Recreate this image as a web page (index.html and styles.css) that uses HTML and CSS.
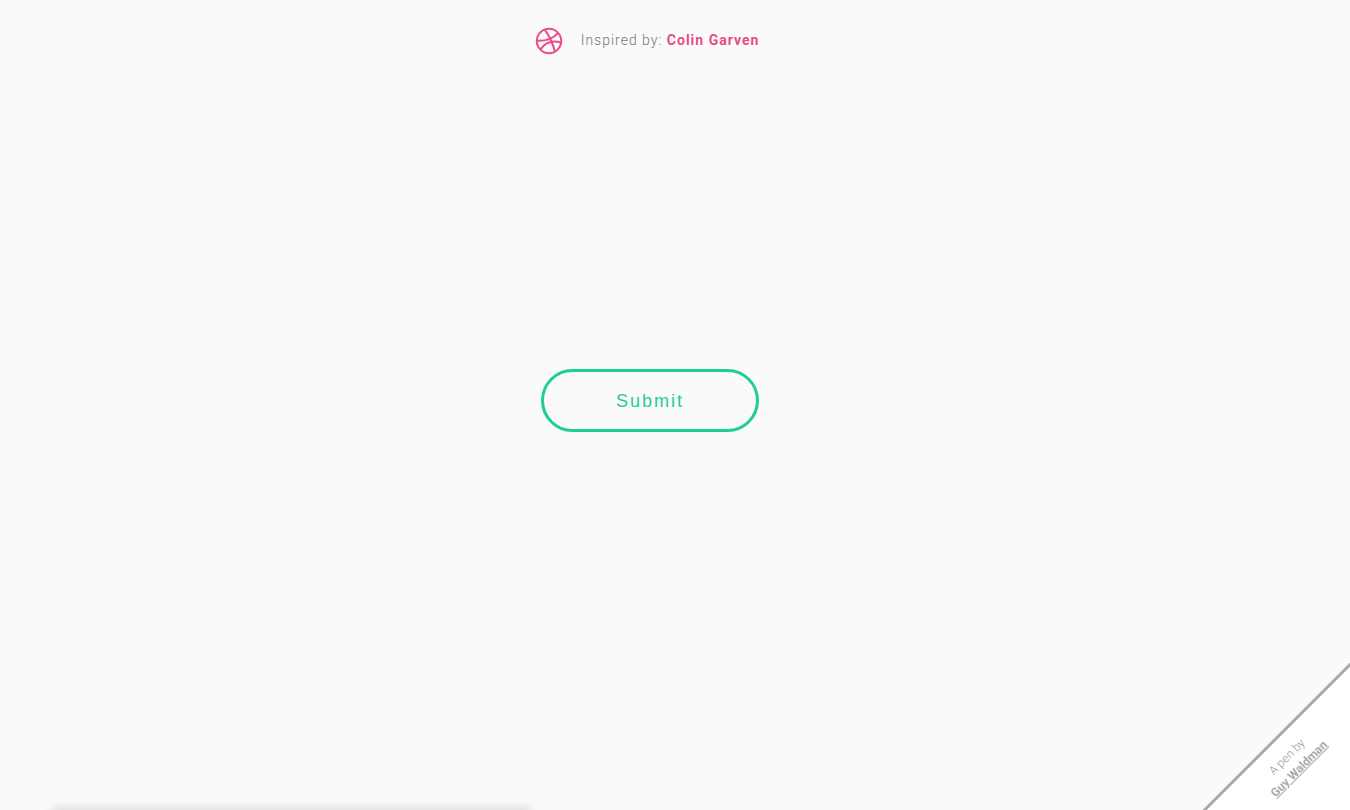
FILE: index.html
```html
<!DOCTYPE html>
<html lang="en">
<head>
<meta charset="utf-8">
<title>Submit Button</title>
<link rel="stylesheet" href="styles.css">
</head>
<body>
<div class="page">
  <header class="credit">
    <svg class="credit-icon" viewBox="0 0 28 28" aria-hidden="true">
      <circle cx="14" cy="14" r="12.2"/>
      <path d="M9.800 2.800C14 8.500 17.800 15.500 19.800 24.500M2 13.800C10 14 18 12 23 5.800M5.600 22.600C9.500 16 17 12.800 26 15.500"/>
    </svg>
    <p class="credit-text">Inspired by: <a class="credit-link" href="#">Colin Garven</a></p>
  </header>
  <main class="stage">
    <button class="submit" type="button">Submit</button>
  </main>
  <div class="panel-edge"></div>
</div>
<aside class="corner">
  <div class="ribbon">
    <span>A pen by</span>
    <a class="ribbon-link" href="#">Guy Waldman</a>
  </div>
</aside>
</body>
</html>
```
FILE: styles.css
```css
* {
  box-sizing: border-box;
}

body {
  margin: 0;
  background: #fafafa;
  font-family: Roboto, "Liberation Sans", sans-serif;
}

.page {
  display: flex;
  flex-direction: column;
  height: 100vh;
  padding: 0 50px;
  overflow: hidden;
}

.credit,
.stage {
  margin-left: -50px;
}

.credit {
  display: flex;
  justify-content: center;
  align-items: center;
  gap: 18px;
  padding: 27px 6px 0 0;
}

.credit-icon {
  width: 28px;
  height: 28px;
  fill: none;
  stroke: #ea4c89;
  stroke-width: 2;
}

.credit-text {
  margin: 0;
  padding-bottom: 2px;
  color: #777;
  font-size: 14px;
  font-weight: 300;
  letter-spacing: 1px;
  line-height: 26px;
}

.credit-link {
  color: #ea4c89;
  font-weight: 700;
  text-decoration: none;
}

.stage {
  flex: 1;
  display: flex;
  justify-content: center;
  align-items: center;
  padding-bottom: 66px;
}

.submit {
  padding: 19px 72px 17px;
  border: 3px solid #1ecd97;
  border-radius: 32px;
  background: transparent;
  color: #1ecd97;
  font-family: "Liberation Sans", Arial, sans-serif;
  font-size: 18px;
  letter-spacing: 2px;
  line-height: 21px;
}

.panel-edge {
  width: 38%;
  height: 1px;
  margin: 0 0 -2px 4px;
  box-shadow: 0 0 10px 2px rgba(0, 0, 0, 0.2);
}

.corner {
  position: fixed;
  right: 0;
  bottom: 0;
  width: 160px;
  height: 160px;
  overflow: hidden;
}

.ribbon {
  position: absolute;
  right: -83px;
  bottom: -15px;
  display: flex;
  flex-direction: column;
  align-items: center;
  width: 240px;
  height: 104px;
  padding: 11px 14px 0 0;
  border-top: 3px solid #aaa;
  background: #fff;
  color: #999;
  font-size: 12px;
  font-weight: 300;
  line-height: 17px;
  transform: rotate(-45deg);
}

.ribbon-link {
  color: #aaa;
  font-weight: 700;
}
```
